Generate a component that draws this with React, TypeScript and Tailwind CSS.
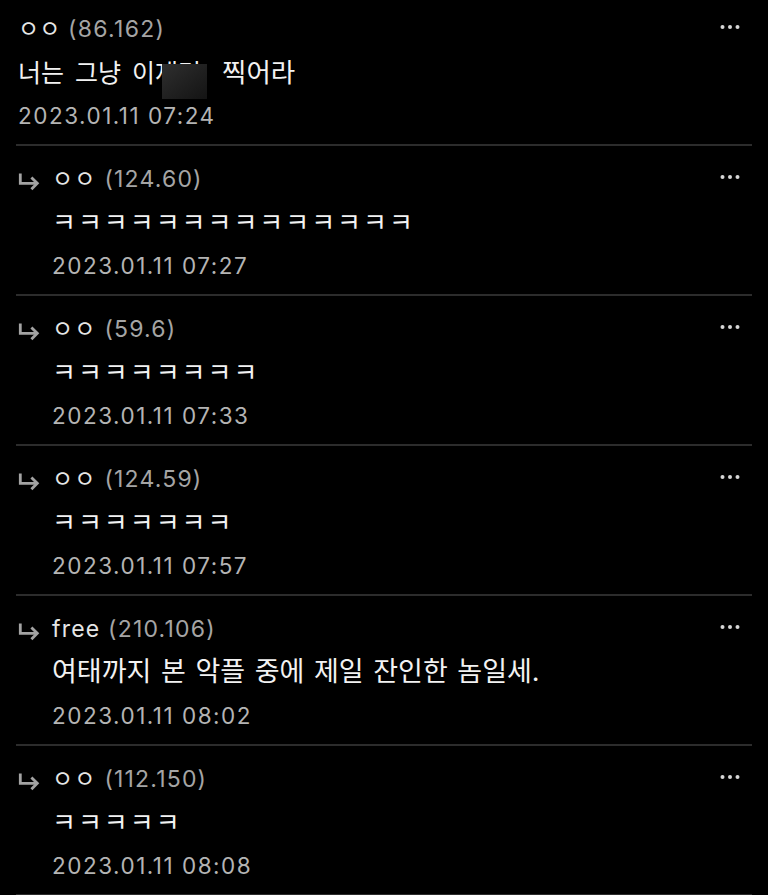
import React from "react";

type Item = { name: string; score: string; text: string; date: string; laugh?: boolean };

const items: Item[] = [
  { name: "ㅇㅇ", score: "(124.60)", text: "ㅋㅋㅋㅋㅋㅋㅋㅋㅋㅋㅋㅋㅋㅋ", date: "2023.01.11 07:27", laugh: true },
  { name: "ㅇㅇ", score: "(59.6)", text: "ㅋㅋㅋㅋㅋㅋㅋㅋ", date: "2023.01.11 07:33", laugh: true },
  { name: "ㅇㅇ", score: "(124.59)", text: "ㅋㅋㅋㅋㅋㅋㅋ", date: "2023.01.11 07:57", laugh: true },
  { name: "free", score: "(210.106)", text: "여태까지 본 악플 중에 제일 잔인한 놈일세.", date: "2023.01.11 08:02" },
  { name: "ㅇㅇ", score: "(112.150)", text: "ㅋㅋㅋㅋㅋ", date: "2023.01.11 08:08", laugh: true },
];

const font = { fontFamily: "Inter, 'Noto Sans CJK KR', sans-serif" };

function Dots() {
  return (
    <svg width="20" height="6" viewBox="0 0 20 6" className="mb-[6px]">
      <circle cx="2.5" cy="3" r="2" fill="#d6d6d6" />
      <circle cx="10" cy="3" r="2" fill="#d6d6d6" />
      <circle cx="17.5" cy="3" r="2" fill="#d6d6d6" />
    </svg>
  );
}

function Arrow() {
  return (
    <svg width="22" height="24" viewBox="0 0 22 24" className="shrink-0">
      <path d="M2.3 5.5 V15.3 H19" fill="none" stroke="#a3a3a3" strokeWidth="2.8" strokeLinejoin="miter" />
      <path d="M13.4 9.4 L19.3 15.3 L13.4 21.2" fill="none" stroke="#a3a3a3" strokeWidth="2.8" strokeLinecap="butt" strokeLinejoin="miter" />
    </svg>
  );
}

export default function App() {
  return (
    <div className="w-[768px] h-[895px] overflow-hidden bg-black" style={font}>
      <div className="mx-[16px] pt-[8px] pb-[7px] border-b-[2px] border-[#2c2c2c]">
        <div className="pl-[2px] pr-[12px]">
          <div className="h-[43px] flex items-center justify-between">
            <div className="text-[23px] tracking-[1.3px]">
              <span className="text-[#e6e6e6] tracking-[0px]">ㅇㅇ</span>
              <span className="text-[#a5a5a5]"> (86.162)</span>
            </div>
            <Dots />
          </div>
          <div className="h-[43px] flex items-center text-[25px] [word-spacing:4px] text-[#f2f2f2]">
            <span className="whitespace-nowrap">
              너는 그냥 이
              <span className="relative inline-block w-[56px]">
                재명
                <span className="absolute left-[7px] top-[9px] w-[45px] h-[35px] bg-gradient-to-br from-[#2f2f2f] to-[#141414]" />
              </span>{" "}
              <span className="text-[26.5px]">찍어라</span>
            </span>
          </div>
          <div className="h-[43px] flex items-center text-[22.5px] tracking-[1.5px] text-[#b4b4b4]">2023.01.11 07:24</div>
        </div>
      </div>
      {items.map((it, i) => (
        <div key={i} className="mx-[16px] pt-[12px] pb-[7px] border-b-[2px] border-[#2c2c2c]">
          <div className="pl-[2px] pr-[12px]">
            <div className="h-[43px] flex items-center justify-between">
              <div className="flex items-center gap-[12px]">
                <Arrow />
                <div className="text-[23px] tracking-[1.2px]">
                  <span className="text-[#e6e6e6]">{it.name}</span>
                  <span className="text-[#a5a5a5]"> {it.score}</span>
                </div>
              </div>
              <Dots />
            </div>
            <div
              className={
                it.laugh
                  ? "h-[43px] flex items-center pl-[34px] text-[26px] tracking-[2px] text-[#f2f2f2]"
                  : "h-[43px] flex items-center pl-[34px] text-[27px] [word-spacing:2px] text-[#f2f2f2]"
              }
            >
              {it.text}
            </div>
            <div className="h-[43px] flex items-center pl-[34px] text-[22.5px] tracking-[1.5px] text-[#b4b4b4]">{it.date}</div>
          </div>
        </div>
      ))}
    </div>
  );
}
